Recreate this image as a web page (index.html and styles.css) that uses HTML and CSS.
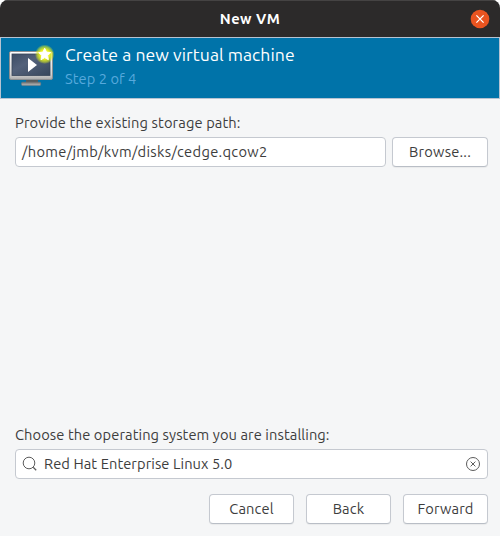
FILE: index.html
```html
<!DOCTYPE html>
<html lang="en">
<head>
<meta charset="utf-8">
<title>New VM</title>
<link rel="stylesheet" href="styles.css">
</head>
<body>
<div class="window">
  <header class="titlebar">
    <h1 class="window-title"><span>New VM</span></h1>
    <button class="close" aria-label="Close">
      <svg width="20" height="20" viewBox="0 0 20 20"><circle cx="10" cy="10" r="9.3" fill="#e95420"/><path d="M6.4 6.4l7.2 7.2M13.6 6.4l-7.2 7.2" stroke="#fff" stroke-width="1.3"/></svg>
    </button>
  </header>
  <section class="banner">
    <svg class="vm-icon" width="48" height="48" viewBox="0 0 48 48">
      <defs>
        <linearGradient id="frame" x1="0" y1="0" x2="0" y2="1"><stop offset="0" stop-color="#fff"/><stop offset=".8" stop-color="#d4d4d4"/><stop offset="1" stop-color="#aaa"/></linearGradient>
        <linearGradient id="screen" x1="0" y1="0" x2="1" y2="1"><stop offset="0" stop-color="#3c4c64"/><stop offset=".4" stop-color="#53617a"/><stop offset="1" stop-color="#36465c"/></linearGradient>
        <linearGradient id="stand" x1="0" y1="0" x2="0" y2="1"><stop offset="0" stop-color="#777"/><stop offset="1" stop-color="#bbb"/></linearGradient>
        <radialGradient id="glow"><stop offset="0" stop-color="#ffff50"/><stop offset=".5" stop-color="#e7ef22"/><stop offset=".78" stop-color="#d8ea20" stop-opacity=".6"/><stop offset="1" stop-color="#d8ea20" stop-opacity="0"/></radialGradient>
      </defs>
      <path d="M18 34h12v4H18z" fill="#555b5e"/>
      <rect x="13.5" y="37.2" width="19.2" height="3.4" rx="1" fill="url(#stand)" stroke="#777" stroke-width=".5"/>
      <rect x="1.5" y="6.5" width="43" height="28" rx="1.5" fill="url(#frame)" stroke="#8b8f92"/>
      <rect x="4" y="9" width="38" height="21.5" fill="url(#screen)" stroke="#39465a" stroke-width=".8"/>
      <path d="M20 13l9 7-9 7z" fill="#fff"/>
      <circle cx="36.7" cy="9.3" r="9.8" fill="url(#glow)"/>
      <path d="M36.7 3.3l1.8 3.8 4.2.5-3.1 2.9.8 4.2-3.7-2.1-3.7 2.1.8-4.2-3.1-2.9 4.2-.5z" fill="#fff" stroke="#fff" stroke-linejoin="round"/>
    </svg>
    <div class="headline">
      <div class="heading">Create a new virtual machine</div>
      <div class="step">Step 2 of 4</div>
    </div>
  </section>
  <main class="content">
    <label class="storage-label">Provide the existing storage path:</label>
    <div class="row">
      <div class="entry path"><span>/home/jmb/kvm/disks/cedge.qcow2</span></div>
      <button class="button browse"><span>Browse...</span></button>
    </div>
    <label class="os-label">Choose the operating system you are installing:</label>
    <div class="entry search">
      <svg class="search-icon" width="16" height="16" viewBox="0 0 16 16" fill="none" stroke="#5c5c5c"><circle cx="7" cy="7" r="5.8"/><path d="M11.2 11.2l3 3" stroke-width="1.3"/></svg>
      <span class="os-name">Red Hat Enterprise Linux 5.0</span>
      <svg class="clear-icon" width="16" height="16" viewBox="0 0 16 16" fill="none" stroke="#5c5c5c"><circle cx="8" cy="8" r="6.5"/><path d="M5.6 5.6l4.8 4.8M10.4 5.6l-4.8 4.8"/></svg>
    </div>
    <footer class="actions">
      <button class="button cancel"><span>Cancel</span></button>
      <button class="button back"><span>Back</span></button>
      <button class="button forward"><span>Forward</span></button>
    </footer>
  </main>
</div>
</body>
</html>
```
FILE: styles.css
```css
* { box-sizing: border-box; }
body {
  margin: 0;
  background: #fff;
  font: 14.667px/20px Ubuntu, "Noto Sans", sans-serif;
  color: #3d3d3d;
}
.window {
  height: 536px;
  display: flex;
  flex-direction: column;
  background: #f5f6f7;
  border-radius: 8px 8px 0 0;
  overflow: hidden;
}
.titlebar {
  height: 37px;
  display: grid;
  grid-template-columns: 30px 1fr 30px;
  align-items: center;
  background: #2c2a2a;
  border-top: 1px solid #454343;
}
.window-title {
  grid-column: 2;
  margin: 0;
  text-align: center;
  font-size: 14.667px;
  line-height: 20px;
  color: #fff;
  letter-spacing: .45px;
}
.close {
  padding: 0;
  border: 0;
  background: none;
  height: 20px;
  width: 20px;
}
.close svg { display: block; }
.banner {
  height: 62px;
  display: flex;
  border: 1px solid #b6c3d2;
  background: #0073a9;
  padding: 6px 7px;
}
.vm-icon { margin-top: 1px; }
.headline { margin-left: 9px; white-space: nowrap; }
.heading { font-size: 17.6px; line-height: 22px; color: #fff; letter-spacing: .06px; }
.step { margin-top: 3px; line-height: 20px; color: #57a9dc; letter-spacing: .05px; }
.content {
  flex: 1;
  display: flex;
  flex-direction: column;
  padding: 14px 12px 12px 15px;
  white-space: nowrap;
}
.storage-label { height: 24px; line-height: 20px; letter-spacing: .12px; }
.row { display: flex; gap: 6px; height: 30px; }
.entry {
  height: 30px;
  display: flex;
  align-items: center;
  background: #fff;
  border: 1px solid #c5c9d0;
  border-radius: 4px;
  padding: 0 6px;
}
.path { width: 371px; letter-spacing: .32px; }
.button {
  height: 30px;
  width: 85px;
  padding: 0;
  font: inherit;
  color: inherit;
  background: #fff;
  border: 1px solid #c5c9d0;
  border-bottom-color: #b9bec6;
  border-radius: 4px;
  box-shadow: 0 1px 1px #0000000d;
  letter-spacing: .15px;
}
.browse { width: 96px; letter-spacing: .22px; }
.os-label { margin-top: auto; height: 24px; line-height: 20px; letter-spacing: .09px; }
.search-icon { flex: none; }
.os-name { margin-left: 6px; letter-spacing: .08px; }
.clear-icon { margin-left: auto; flex: none; }
.actions {
  display: flex;
  justify-content: flex-end;
  gap: 12px;
  margin-top: 15px;
}
```
